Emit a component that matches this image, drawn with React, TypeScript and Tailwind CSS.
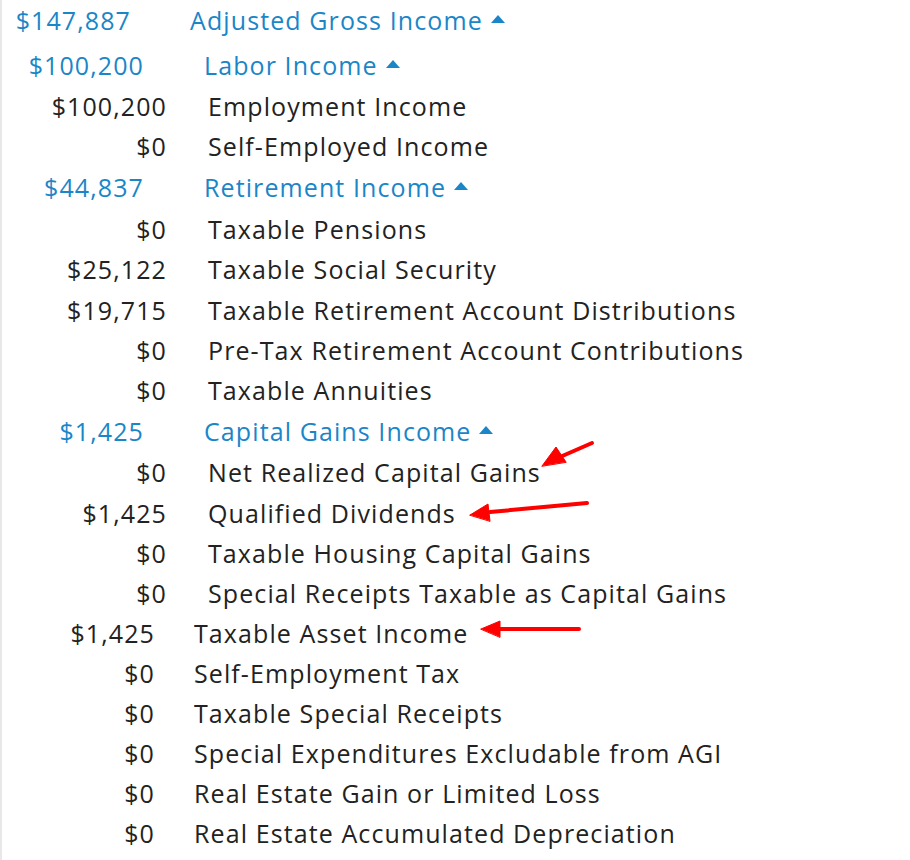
const blue = "text-[#1a86c8]";

type Row = {
  amount: string;
  label: string;
  kind: "top" | "group" | "item" | "child";
  gap?: string;
};

const rows: Row[] = [
  { amount: "$147,887", label: "Adjusted Gross Income", kind: "top" },
  { amount: "$100,200", label: "Labor Income", kind: "group", gap: "mt-[5px]" },
  { amount: "$100,200", label: "Employment Income", kind: "child", gap: "mt-px" },
  { amount: "$0", label: "Self-Employed Income", kind: "child" },
  { amount: "$44,837", label: "Retirement Income", kind: "group", gap: "mt-px" },
  { amount: "$0", label: "Taxable Pensions", kind: "child", gap: "mt-[2px]" },
  { amount: "$25,122", label: "Taxable Social Security", kind: "child" },
  { amount: "$19,715", label: "Taxable Retirement Account Distributions", kind: "child", gap: "mt-px" },
  { amount: "$0", label: "Pre-Tax Retirement Account Contributions", kind: "child" },
  { amount: "$0", label: "Taxable Annuities", kind: "child" },
  { amount: "$1,425", label: "Capital Gains Income", kind: "group", gap: "mt-px" },
  { amount: "$0", label: "Net Realized Capital Gains", kind: "child", gap: "mt-px" },
  { amount: "$1,425", label: "Qualified Dividends", kind: "child", gap: "mt-px" },
  { amount: "$0", label: "Taxable Housing Capital Gains", kind: "child" },
  { amount: "$0", label: "Special Receipts Taxable as Capital Gains", kind: "child" },
  { amount: "$1,425", label: "Taxable Asset Income", kind: "item" },
  { amount: "$0", label: "Self-Employment Tax", kind: "item" },
  { amount: "$0", label: "Taxable Special Receipts", kind: "item" },
  { amount: "$0", label: "Special Expenditures Excludable from AGI", kind: "item" },
  { amount: "$0", label: "Real Estate Gain or Limited Loss", kind: "item" },
  { amount: "$0", label: "Real Estate Accumulated Depreciation", kind: "item" },
];

const amountWidth: Record<Row["kind"], string> = {
  top: "w-[129px] mr-[59px]",
  group: "w-[142px] mr-[60px]",
  item: "w-[153px] mr-[39px]",
  child: "w-[165px] mr-[41px]",
};

const Caret = () => (
  <svg width="14" height="8" viewBox="0 0 14 8" className="ml-[8px] mb-[3px] fill-[#1a86c8]">
    <polygon points="0,8 7,0 14,8" />
  </svg>
);

const Arrows = () => (
  <svg
    width="910"
    height="860"
    className="absolute left-0 top-0 pointer-events-none"
    viewBox="0 0 910 860"
  >
    <g stroke="#ff0000" strokeWidth="4" strokeLinecap="round" fill="#ff0000">
      <line x1="592" y1="443" x2="560" y2="457" />
      <polygon points="542,466 556,447 566,462" strokeWidth="1" strokeLinejoin="round" />
      <line x1="587" y1="503" x2="490" y2="512" />
      <polygon points="470,515 488,504 490,521" strokeWidth="1" strokeLinejoin="round" />
      <line x1="579" y1="629" x2="500" y2="629" />
      <polygon points="481,629 500,621 500,637" strokeWidth="1" strokeLinejoin="round" />
    </g>
  </svg>
);

export default function App() {
  return (
    <div className="relative w-[910px] h-[860px] bg-white overflow-hidden font-['Open_Sans',sans-serif] text-[25px] tracking-[1.1px]">
      <div className="h-full border-l-2 border-[#e8e8e8]">
        {rows.map((r, i) => {
          const isBlue = r.kind === "top" || r.kind === "group";
          return (
            <div
              key={i}
              className={`flex items-center h-[40px] leading-none ${r.gap ?? ""} ${
                isBlue ? blue : "text-[#222222]"
              }`}
            >
              <div className={`shrink-0 text-right ${amountWidth[r.kind]}`}>{r.amount}</div>
              <div className="flex items-center whitespace-nowrap">
                {r.label}
                {isBlue && <Caret />}
              </div>
            </div>
          );
        })}
      </div>
      <Arrows />
    </div>
  );
}
